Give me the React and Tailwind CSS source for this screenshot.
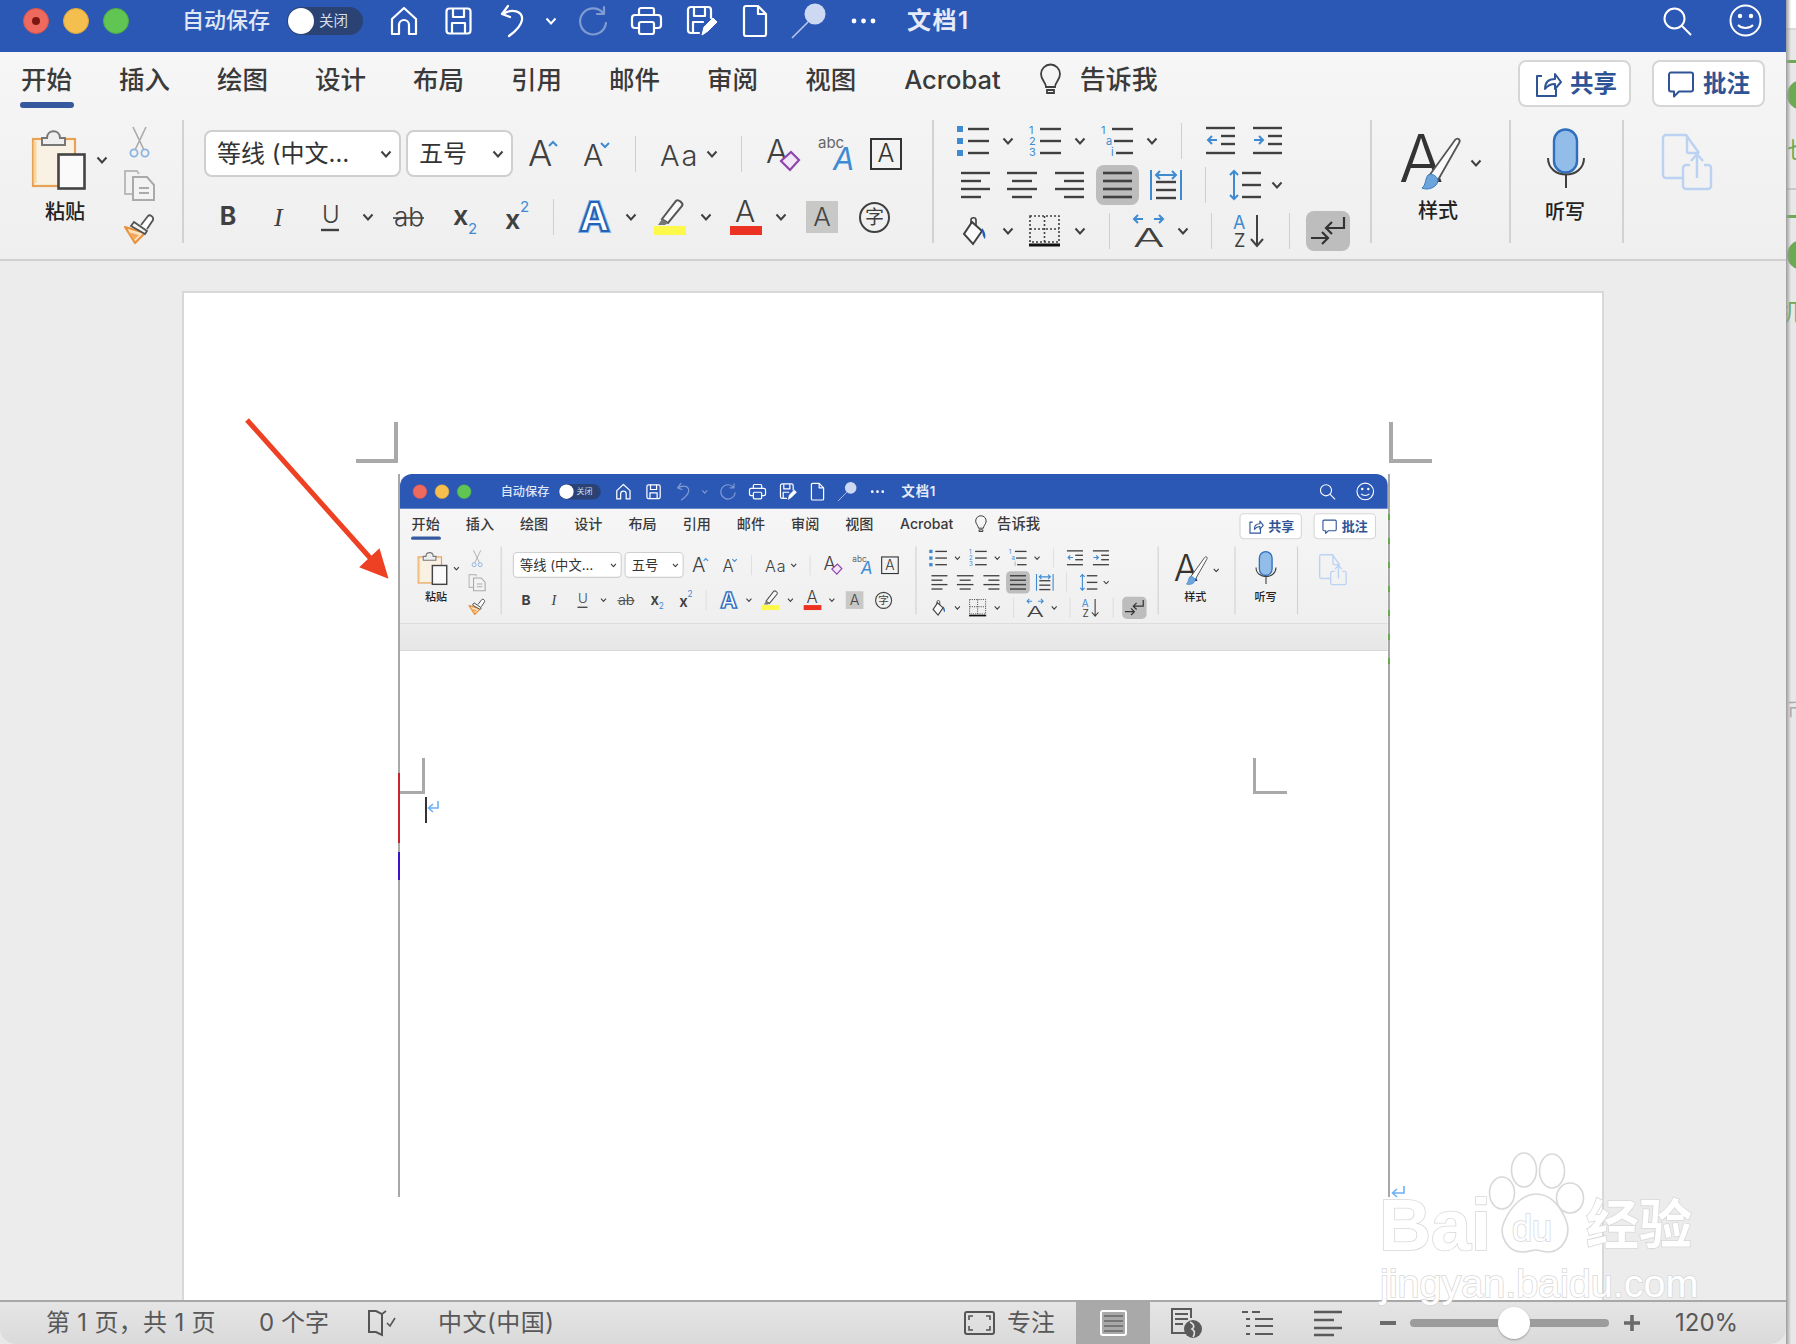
import React from "react";

const C = "#404040";
const BL = "#3f8bd2";

const T = ({ x, y, s, c = C, w = 400, i, children, ls }) => (
  <text x={x} y={y} fontSize={s} fill={c} fontWeight={w} fontStyle={i ? "italic" : "normal"} letterSpacing={ls}>
    {children}
  </text>
);

const Chev = ({ className = "", c = C }) => (
  <svg className={"shrink-0 " + className} width="12" height="8" viewBox="0 0 12 8" fill="none">
    <path d="M1.5 1.5 6 6.5l4.5-5" stroke={c} strokeWidth="2" />
  </svg>
);

const Sep = ({ className = "" }) => <div className={"w-[1px] h-[36px] shrink-0 bg-[#cfcfcf] " + className} />;

const Lines = ({ w, h, lines, c = C, sw = 2.4, className = "", children }) => (
  <svg className={"shrink-0 overflow-visible " + className} width={w} height={h} viewBox={`0 0 ${w} ${h}`} fill="none">
    {lines.map((l, i) => (
      <path key={i} d={`M${l[0]} ${l[1]}H${l[2]}`} stroke={c} strokeWidth={sw} />
    ))}
    {children}
  </svg>
);

const Sv = ({ w, h, className = "", children }) => (
  <svg className={"shrink-0 overflow-visible " + className} width={w} height={h} viewBox={`0 0 ${w} ${h}`} fill="none">
    {children}
  </svg>
);

function TitleBar({ dimUndo }) {
  const s = { stroke: "#fff", strokeWidth: 2.2, strokeLinejoin: "round", strokeLinecap: "round" };
  return (
    <div className="flex items-center h-[63px] shrink-0 bg-[#2c58b5] text-white">
      <div className="ml-[23px] w-[26px] h-[26px] rounded-full bg-[#ee6a5f] border border-[#d9534a] flex items-center justify-center">
        {!dimUndo && <div className="w-[8px] h-[8px] rounded-full bg-[#7d1610]" />}
      </div>
      <div className="ml-[14px] w-[26px] h-[26px] rounded-full bg-[#f5bf4f] border border-[#dfa73a]" />
      <div className="ml-[14px] w-[26px] h-[26px] rounded-full bg-[#61c554] border border-[#4fae45]" />
      <span className="ml-[53px] w-[88px] text-[22px] font-medium whitespace-nowrap text-[#dfe6f6]">自动保存</span>
      <div className="ml-[17px] w-[76px] h-[28px] rounded-full bg-[#2a4374] flex items-center">
        <div className="ml-[1px] w-[26px] h-[26px] rounded-full bg-white" />
        <span className="ml-[5px] text-[14.5px] text-[#d6dcea]">关闭</span>
      </div>
      <Sv w={28} h={30} className="ml-[27px]">
        <path d="M2 28V13L14 2l12 11v15h-7v-9a5 5 0 0 0-10 0v9z" {...s} />
      </Sv>
      <Sv w={27} h={28} className="ml-[27px]">
        <rect x="1.5" y="1.5" width="24" height="25" rx="3" {...s} />
        <path d="M8 2v8h11V2M7 26V16h13v10" {...s} />
      </Sv>
      <Sv w={25} h={33} className={"ml-[28px] " + (dimUndo ? "opacity-40" : "")}>
        <path d="M3 10c9-6 20-3 19 6-1 6-6 11-13 16M8 2 2 10l8 3" {...s} />
      </Sv>
      <Chev className={"ml-[20px] " + (dimUndo ? "opacity-40" : "")} c="#fff" />
      <Sv w={30} h={32} className="ml-[21px] opacity-40">
        <path d="M25 8a13 13 0 1 0 3 10M26 2v7h-7" {...s} />
      </Sv>
      <Sv w={31} h={28} className="ml-[23px]">
        <path d="M8 8V3a2 2 0 0 1 2-2h11a2 2 0 0 1 2 2v5M7 21H4a3 3 0 0 1-3-3v-7a3 3 0 0 1 3-3h23a3 3 0 0 1 3 3v7a3 3 0 0 1-3 3h-3" {...s} />
        <rect x="8" y="15" width="15" height="12" rx="2" {...s} />
      </Sv>
      <Sv w={30} h={30} className="ml-[25px]">
        <path d="M12 27H4a3 3 0 0 1-3-3V4a3 3 0 0 1 3-3h17a3 3 0 0 1 3 3v8" {...s} />
        <path d="M7 2v8h11V2M6 26V16h10" {...s} />
        <path d="M15 29l2-8 9-9 4 4-9 9z" fill="#fff" stroke="#fff" />
      </Sv>
      <Sv w={24} h={32} className="ml-[26px]">
        <path d="M3 1h12l8 8v20a2 2 0 0 1-2 2H3a2 2 0 0 1-2-2V3a2 2 0 0 1 2-2zM15 1v8h8" {...s} />
      </Sv>
      <Sv w={36} h={38} className="ml-[23px]">
        <circle cx="25" cy="12" r="10.5" fill="#cdd8f2" />
        <path d="M18 20 2 36" stroke="#b9c8ea" strokeWidth="1.6" />
      </Sv>
      <Sv w={25} h={6} className="ml-[25px]">
        <circle cx="3" cy="3" r="2.4" fill="#fff" />
        <circle cx="12.5" cy="3" r="2.4" fill="#fff" />
        <circle cx="22" cy="3" r="2.4" fill="#fff" />
      </Sv>
      <span className="ml-[31px] text-[24px] font-semibold tracking-[1.5px] text-[#e6ebf7] whitespace-nowrap">文档1</span>
      <Sv w={29} h={28} className="ml-auto">
        <circle cx="11.5" cy="11.5" r="10" stroke="#fff" strokeWidth="2" />
        <path d="m19 19 9 9" stroke="#fff" strokeWidth="2" />
      </Sv>
      <Sv w={33} h={33} className="ml-[37px] mr-[24px]">
        <circle cx="16.5" cy="16.5" r="15" stroke="#fff" strokeWidth="2" />
        <circle cx="11" cy="12" r="2.2" fill="#fff" />
        <circle cx="22" cy="12" r="2.2" fill="#fff" />
        <path d="M9 21c4 4 11 4 15 0" stroke="#fff" strokeWidth="2" />
      </Sv>
    </div>
  );
}

function Tabs() {
  const tab = "text-[25.5px] leading-[40px] font-medium text-[#3a3a3a] whitespace-nowrap";
  return (
    <div className="flex items-start h-[68px] pt-[8px] pl-[21px]">
      <div className="relative">
        <span className={tab}>开始</span>
        <div className="absolute left-[-1px] right-[-2px] top-[42px] h-[6px] rounded-full bg-[#35589f]" />
      </div>
      {["插入", "绘图", "设计", "布局", "引用", "邮件", "审阅", "视图"].map((t) => (
        <span key={t} className={tab + " ml-[47px]"}>
          {t}
        </span>
      ))}
      <span className={tab + " ml-[48px]"}>Acrobat</span>
      <Sv w={21} h={32} className="ml-[39px] mt-[4px]">
        <path d="M6 23c0-5-5-7-5-13a9.500 9.500 0 0 1 19 0c0 6-5 8-5 13zM7 26h7v3H7z" stroke={C} strokeWidth="1.8" />
      </Sv>
      <span className="ml-[19px] text-[26px] leading-[40px] font-medium text-[#3a3a3a] whitespace-nowrap">告诉我</span>
      <div className="ml-auto w-[113px] h-[47px] flex items-center bg-white border-2 border-[#d6d6d6] rounded-lg text-[#2f5496]">
        <Sv w={26} h={26} className="ml-[15px]">
          <path d="M7 5H2v20h19v-7M10 18c0-7 4-10 10-10V3l6 8-6 7v-5c-4 0-7 1-10 5z" stroke="#2f5496" strokeWidth="2" strokeLinejoin="round" />
        </Sv>
        <span className="ml-[9px] text-[23.5px] font-semibold">共享</span>
      </div>
      <div className="ml-[21px] mr-[21px] w-[113px] h-[47px] flex items-center bg-white border-2 border-[#d6d6d6] rounded-lg text-[#2f5496]">
        <Sv w={26} h={26} className="ml-[14px]">
          <path d="M3 1.500h20a2 2 0 0 1 2 2v15a2 2 0 0 1-2 2H11l-5 5v-5H3a2 2 0 0 1-2-2v-15a2 2 0 0 1 2-2z" stroke="#2f5496" strokeWidth="2" strokeLinejoin="round" />
        </Sv>
        <span className="ml-[9px] text-[23.5px] font-semibold">批注</span>
      </div>
    </div>
  );
}

function Clipboard() {
  return (
    <div className="w-[184px] shrink-0 h-full border-r-2 border-[#d2d2d2] flex items-start">
      <div className="ml-[32px] w-[75px] pt-[10px] flex flex-col">
        <div className="flex items-center">
          <Sv w={54} h={60}>
            <rect x="1" y="9" width="42" height="47" fill="#f9f2e4" stroke="#e8a255" strokeWidth="2.2" />
            <path d="M3 53V11" stroke="#f7d79f" strokeWidth="3" />
            <path d="M10 15V8h5c0-9 13-9 13 0h5v7z" fill="#eee" stroke="#777" strokeWidth="2" />
            <rect x="26.500" y="24.500" width="26" height="34" fill="#fafafa" stroke="#444" strokeWidth="2.6" />
          </Sv>
          <Chev className="ml-[10px]" />
        </div>
        <span className="mt-[8px] ml-[13px] text-[20px] leading-[28px] font-medium text-[#222]">粘贴</span>
      </div>
      <div className="ml-[16px] flex flex-col pt-[7px]">
        <Sv w={21} h={31} className="ml-[6px]">
          <path d="M4 0l11 23M17 0 6 23" stroke="#a9a9a9" strokeWidth="1.6" />
          <circle cx="5" cy="26" r="3.6" stroke="#8db4de" strokeWidth="1.8" />
          <circle cx="16" cy="26" r="3.6" stroke="#8db4de" strokeWidth="1.8" />
        </Sv>
        <Sv w={33} h={31} className="mt-[12px]">
          <path d="M13 24H2V1h12l2 3" stroke="#bbb" strokeWidth="2" />
          <path d="M10 7h14l7 8v15H10z" fill="#f3f3f3" stroke="#aaa" strokeWidth="2" />
          <path d="M16 18h10M16 23h10" stroke="#aaa" strokeWidth="2" />
        </Sv>
        <Sv w={32} h={30} className="mt-[13px]">
          <path d="M2 13 22 19 12 29Z" fill="#fbe3c4" stroke="#e8913c" strokeWidth="2.2" strokeLinejoin="round" />
          <path d="M5 18l11 3-5 5z" fill="#f2a95c" />
          <path d="M11 8 24 17l-2 3L8 12z" fill="#f5f5f5" stroke="#555" strokeWidth="1.8" />
          <path d="M18 11 25 2c2-2 6 1 5 4l-6 9" fill="#fff" stroke="#555" strokeWidth="1.8" />
        </Sv>
      </div>
    </div>
  );
}

function FontGroup() {
  return (
    <div className="w-[748px] shrink-0 h-full flex flex-col pt-[10px]">
      <div className="flex items-center h-[47px]">
        <div className="ml-[20px] w-[197px] h-[47px] flex items-center bg-white border-2 border-[#cfcfcf] rounded-lg">
          <span className="ml-[11px] text-[24px] text-[#333] whitespace-nowrap">等线 (中文…</span>
          <Chev className="ml-auto mr-[7px]" />
        </div>
        <div className="ml-[5px] w-[107px] h-[47px] flex items-center bg-white border-2 border-[#cfcfcf] rounded-lg">
          <span className="ml-[11px] text-[24px] text-[#333]">五号</span>
          <Chev className="ml-auto mr-[7px]" />
        </div>
        <Sv w={30} h={36} className="ml-[15px]">
          <T x={0} y={30} s={36} w={300}>A</T>
          <path d="m21 10 4-4 4 4" stroke={BL} strokeWidth="2" />
        </Sv>
        <Sv w={27} h={36} className="ml-[25px]">
          <T x={0} y={30} s={30} w={300}>A</T>
          <path d="m18 7 4 4 4-4" stroke={BL} strokeWidth="2" />
        </Sv>
        <Sep className="ml-[25px]" />
        <Sv w={38} h={36} className="ml-[24px]">
          <T x={0} y={30} s={29} w={300} ls={2}>Aa</T>
        </Sv>
        <Chev className="ml-[8px]" />
        <Sep className="ml-[23px]" />
        <Sv w={33} h={36} className="ml-[24px]">
          <T x={0} y={27} s={33} w={300}>A</T>
          <path d="m25 16 8 8-9 10-9-9z" fill="#f2e6f7" stroke="#8e44ad" strokeWidth="2.2" />
        </Sv>
        <Sv w={33} h={38} className="ml-[19px]">
          <T x={0} y={13} s={15} c="#666">abc</T>
          <T x={15} y={35} s={31} c={BL} i>A</T>
        </Sv>
        <div className="ml-[19px] w-[32px] h-[32px] border-2 border-[#333] flex items-center justify-center text-[25px] font-light text-[#333] leading-none">
          A
        </div>
      </div>
      <div className="flex items-center h-[40px] mt-[20px]">
        <span className="ml-[33px] w-[22px] text-center text-[25px] font-bold text-[#404040]">B</span>
        <Sv w={22} h={30} className="ml-[29px]">
          <text x="6" y="24" fontSize="26" fill={C} fontStyle="italic" fontFamily="Liberation Serif">I</text>
        </Sv>
        <Sv w={22} h={32} className="ml-[29px]">
          <T x={3} y={22} s={24} w={300}>U</T>
          <path d="M2 29h18" stroke={C} strokeWidth="2.4" />
        </Sv>
        <Chev className="ml-[21px]" />
        <Sv w={31} h={32} className="ml-[19px]">
          <T x={1} y={25} s={26} w={300}>ab</T>
          <path d="M0 17h31" stroke={C} strokeWidth="1.6" />
        </Sv>
        <Sv w={22} h={36} className="ml-[29px]">
          <T x={0} y={26} s={27} w={600}>x</T>
          <T x={15} y={35} s={15} c={BL}>2</T>
        </Sv>
        <Sv w={22} h={36} className="ml-[30px]">
          <T x={0} y={30} s={27} w={600}>x</T>
          <T x={15} y={13} s={15} c={BL}>2</T>
        </Sv>
        <Sep className="ml-[26px]" />
        <Sv w={33} h={36} className="ml-[24px]">
          <text x="16.500" y="32" textAnchor="middle" fontSize="40" fontWeight="700" fill="#7db2e8" stroke="#7db2e8" strokeWidth="4">A</text>
          <text x="16.500" y="32" textAnchor="middle" fontSize="40" fontWeight="700" fill="#fff" stroke="#2562b5" strokeWidth="2">A</text>
        </Sv>
        <Chev className="ml-[14px]" />
        <Sv w={32} h={38} className="ml-[17px]">
          <path d="M8 21 22 3c2-2 8 2 6 5L14 25z" fill="#f8f8f8" stroke="#555" strokeWidth="2" />
          <path d="M8 21l6 4-3 2H4z" fill="#777" />
          <rect x="0" y="28" width="32" height="9" fill="#fdf94a" />
        </Sv>
        <Chev className="ml-[14px]" />
        <Sv w={32} h={38} className="ml-[18px]">
          <T x={5} y={24} s={30} w={300}>A</T>
          <rect x="0" y="28" width="32" height="9" fill="#ec3323" />
        </Sv>
        <Chev className="ml-[13px]" />
        <div className="ml-[19px] w-[32px] h-[32px] bg-[#c8c8c6] flex items-center justify-center text-[26px] font-light text-[#444] leading-none">
          A
        </div>
        <div className="ml-[21px] w-[31px] h-[31px] rounded-full border-2 border-[#404040] flex items-center justify-center text-[19px] text-[#404040] leading-none">
          字
        </div>
      </div>
    </div>
  );
}

function ParaGroup() {
  const row = "flex items-center h-[40px]";
  const L3 = [[11, 3, 32], [11, 15, 32], [11, 27, 32]];
  return (
    <div className="w-[438px] shrink-0 h-full border-l-2 border-[#d2d2d2] flex flex-col pt-[3px] gap-[6px]">
      <div className={row}>
        <Lines w={32} h={30} lines={L3} className="ml-[23px]">
          <rect x="0" y="0" width="6" height="6" fill={BL} />
          <rect x="0" y="12" width="6" height="6" fill={BL} />
          <rect x="0" y="24" width="6" height="6" fill={BL} />
        </Lines>
        <Chev className="ml-[13px]" />
        <Lines w={32} h={30} lines={L3} className="ml-[15px]">
          <T x={0} y={8} s={11} c={BL}>1</T>
          <T x={0} y={19} s={11} c={BL}>2</T>
          <T x={0} y={30} s={11} c={BL}>3</T>
        </Lines>
        <Chev className="ml-[13px]" />
        <Lines w={32} h={30} lines={[[11, 3, 32], [13, 15, 32], [15, 27, 32]]} className="ml-[15px]">
          <T x={0} y={8} s={11} c={BL}>1</T>
          <T x={5} y={19} s={11} c={BL}>a</T>
          <T x={10} y={30} s={11} c={BL}>i</T>
        </Lines>
        <Chev className="ml-[13px]" />
        <Sep className="ml-[23px]" />
        <Lines w={29} h={30} lines={[[0, 2, 29], [15, 10, 29], [15, 18, 29], [0, 27, 29]]} className="ml-[24px]">
          <path d="M11 14H2m4-4-4 4 4 4" stroke={BL} strokeWidth="2" />
        </Lines>
        <Lines w={29} h={30} lines={[[0, 2, 29], [15, 10, 29], [15, 18, 29], [0, 27, 29]]} className="ml-[18px]">
          <path d="M1 14h9m-4-4 4 4-4 4" stroke={BL} strokeWidth="2" />
        </Lines>
      </div>
      <div className={row}>
        <Lines w={30} h={28} lines={[[1, 2, 30], [1, 10, 21], [1, 18, 30], [1, 26, 21]]} className="ml-[26px]" />
        <Lines w={30} h={28} lines={[[0, 2, 30], [5, 10, 25], [0, 18, 30], [5, 26, 25]]} className="ml-[17px]" />
        <Lines w={30} h={28} lines={[[0, 2, 29], [9, 10, 29], [0, 18, 29], [9, 26, 29]]} className="ml-[18px]" />
        <div className="ml-[11px] w-[43px] h-[40px] rounded-lg bg-[#bdbdbd] flex items-center justify-center">
          <Lines w={29} h={28} lines={[[0, 2, 29], [0, 10, 29], [0, 18, 29], [0, 26, 29]]} sw={2.6} />
        </div>
        <Lines w={32} h={34} lines={[[6, 14, 26], [6, 22, 26], [6, 30, 26]]} sw={2.4} className="ml-[11px]">
          <path d="M1 2v30M31 2v30" stroke={BL} strokeWidth="2" />
          <path d="M6 7h20M10 3 6 7l4 4M22 3l4 4-4 4" stroke={BL} strokeWidth="2" />
        </Lines>
        <Sep className="ml-[23px]" />
        <Lines w={32} h={32} lines={[[13, 4, 32], [13, 16, 32], [13, 28, 32]]} className="ml-[23px]">
          <path d="M5 2v28M1 6l4-4 4 4M1 26l4 4 4-4" stroke={BL} strokeWidth="2" />
        </Lines>
        <Chev className="ml-[10px]" />
      </div>
      <div className={row}>
        <Sv w={25} h={30} className="ml-[28px]">
          <path d="M9 8V4c0-3 5-3 5 0v6" stroke={C} strokeWidth="1.6" />
          <path d="M10 6 2 18l9 10 9-13z" fill="#fafafa" stroke={C} strokeWidth="2" />
          <path d="M20 12c3 3 4 7 3 11-2-2-3-5-3-11z" fill="#1f5ebd" />
        </Sv>
        <Chev className="ml-[15px]" />
        <Sv w={31} h={32} className="ml-[15px]">
          <path d="M1 1h29v26H1zM15.500 1v26M1 14h29" stroke={C} strokeWidth="1.6" strokeDasharray="2 2" />
          <path d="M0 30h31" stroke="#111" strokeWidth="3" />
        </Sv>
        <Chev className="ml-[14px]" />
        <Sep className="ml-[23px]" />
        <Sv w={31} h={34} className="ml-[23px]">
          <g transform="translate(0,33) scale(1.8,1)">
            <T x={0} y={0} s={26} w={300}>A</T>
          </g>
          <path d="M1 5h9M5 1 1 5l4 4M21 5h9M26 1l4 4-4 4" stroke={BL} strokeWidth="2" />
        </Sv>
        <Chev className="ml-[13px]" />
        <Sep className="ml-[22px]" />
        <Sv w={32} h={34} className="ml-[21px]">
          <T x={0} y={15} s={18} c={BL}>A</T>
          <T x={1} y={33} s={18}>Z</T>
          <path d="M24 1v30M18 25l6 7 6-7" stroke={C} strokeWidth="2" />
        </Sv>
        <Sep className="ml-[24px]" />
        <div className="ml-[16px] w-[44px] h-[40px] rounded-lg bg-[#bdbdbd] flex items-center justify-center">
          <Sv w={36} h={30}>
            <path d="M1 22h17m-6-6 6 6-6 6" stroke="#333" strokeWidth="2.2" />
            <path d="M34 1v11H17m5-6-6 6 6 6" stroke="#333" strokeWidth="2.2" />
          </Sv>
        </div>
      </div>
    </div>
  );
}

function Right() {
  return (
    <>
      <div className="w-[139px] shrink-0 h-full border-l-2 border-[#d2d2d2] flex flex-col pt-[14px]">
        <div className="flex items-center ml-[29px]">
          <Sv w={59} h={57}>
            <text x="-2" y="48" fontSize="66" fontWeight="300" fill="#333">A</text>
            <path d="M28 42 54 6c3-3 6 0 4 3L37 46z" fill="#fafafa" stroke="#555" strokeWidth="1.8" />
            <path d="M27 41c5-2 10 2 10 6-1 6-10 10-16 7 4-3 3-9 6-13z" fill="#6ba5dc" stroke="#3a7dc0" />
          </Sv>
          <Chev className="ml-[10px]" />
        </div>
        <span className="mt-[6px] ml-[46px] text-[20px] leading-[28px] font-medium text-[#222]">样式</span>
      </div>
      <div className="w-[113px] shrink-0 h-full border-l-2 border-[#d2d2d2] flex flex-col pt-[8px]">
        <Sv w={38} h={60} className="ml-[36px]">
          <rect x="7" y="1.500" width="23" height="43" rx="11.500" fill="#93bde9" stroke="#2f6fbe" strokeWidth="2.4" />
          <path d="M1 30c0 22 36 22 36 0M19 46v14" stroke={C} strokeWidth="2" />
        </Sv>
        <span className="mt-[10px] ml-[34px] text-[20px] leading-[28px] font-medium text-[#222]">听写</span>
      </div>
      <div className="flex-1 h-full border-l-2 border-[#d2d2d2] pt-[14px]">
        <Sv w={50} h={56} className="ml-[38px]">
          <path d="M20 44H4a3 3 0 0 1-3-3V4a3 3 0 0 1 3-3h20l13 18" stroke="#bcd2f2" strokeWidth="2.4" />
          <path d="M25 1v16a2 2 0 0 0 2 2h10" stroke="#bcd2f2" strokeWidth="2.4" />
          <path d="M28 31h-4a3 3 0 0 0-3 3v18a3 3 0 0 0 3 3h22a3 3 0 0 0 3-3V34a3 3 0 0 0-3-3h-4M35 44V21m-6 6 6-7 6 7" stroke="#bcd2f2" strokeWidth="2.4" />
        </Sv>
      </div>
    </>
  );
}

function Chrome({ dimUndo }) {
  return (
    <>
      <TitleBar dimUndo={dimUndo} />
      <div className="h-[209px] shrink-0 bg-gradient-to-b from-[#f6f6f6] to-[#efefef] border-b-2 border-[#d0d0d0] flex flex-col">
        <Tabs />
        <div className="flex items-start h-[123px]">
          <Clipboard />
          <FontGroup />
          <ParaGroup />
          <Right />
        </div>
      </div>
    </>
  );
}

function Inner() {
  return (
    <div className="relative ml-[214px] mt-[181px] w-[992px] h-[723px] border-l-2 border-r-2 border-[#a8a8a8] bg-white">
      <div className="h-[177px] rounded-t-[12px] overflow-hidden">
        <div className="w-[1786px] origin-top-left scale-[0.553] flex flex-col">
          <Chrome dimUndo />
          <div className="h-[49px] bg-gradient-to-b from-[#ececec] to-[#e6e6e6] border-b-2 border-[#c4c4c4]" />
        </div>
      </div>
      <div className="absolute left-[-2px] top-[299px] w-[2px] h-[70px] bg-[#c8242b]" />
      <div className="absolute left-[-2px] top-[378px] w-[2px] h-[28px] bg-[#3a14c8]" />
      <div className="absolute right-[-2px] top-[40px] w-[2px] h-[150px] bg-[repeating-linear-gradient(#6aa84f_0_6px,transparent_6px_24px)]" />
    </div>
  );
}

const Crop = ({ className }) => <div className={"absolute border-[#a9a9a9] " + className} />;

function Page() {
  return (
    <div className="relative w-[1418px] h-[1007px] ml-[184px] bg-white shadow-[0_0_0_2px_#d8d8d8] flex flex-col">
      <Crop className="left-[172px] top-[129px] w-[42px] h-[41px] border-r-4 border-b-4" />
      <Crop className="left-[1205px] top-[129px] w-[43px] h-[41px] border-l-4 border-b-4" />
      <Inner />
      <Crop className="left-[216px] top-[465px] w-[25px] h-[36px] border-r-[3px] border-b-[3px]" />
      <Crop className="left-[1069px] top-[465px] w-[34px] h-[36px] border-l-[3px] border-b-[3px]" />
      <div className="absolute left-[241px] top-[504px] w-[2px] h-[26px] bg-[#333]" />
      <svg className="absolute left-[243px] top-[507px]" width="13" height="14" viewBox="0 0 13 14" fill="none">
        <path d="M11 1v7H2m4-4L1.500 8 6 12" stroke="#6fb0f5" strokeWidth="1.6" />
      </svg>
      <svg className="absolute left-[1207px] top-[892px]" width="15" height="14" viewBox="0 0 15 14" fill="none">
        <path d="M13 1v7H2m4-4L1.500 8 6 12" stroke="#6fb0f5" strokeWidth="1.6" />
      </svg>
      <svg className="absolute left-[60px] top-[124px]" width="150" height="165" viewBox="0 0 150 165" fill="none">
        <path d="M3 3 128 143" stroke="#ee4023" strokeWidth="5" />
        <path d="M143 160 117 150 135 133z" fill="#ee4023" stroke="#ee4023" strokeWidth="2" />
      </svg>
    </div>
  );
}

function StatusBar() {
  const t = "text-[24px] text-[#585858] whitespace-nowrap";
  return (
    <div className="h-[44px] shrink-0 flex items-center bg-gradient-to-b from-[#e5e5e5] to-[#dadada] border-t-2 border-[#a8a8a8] rounded-b-[16px] overflow-hidden">
      <span className={t + " ml-[46px] w-[170px] tracking-[0.3px]"}>第 1 页，共 1 页</span>
      <span className={t + " ml-[43px] w-[69px]"}>0 个字</span>
      <Sv w={28} h={28} className="ml-[40px]">
        <path d="M1 2h7l6 3v21l-6-3H1zM14 5v21" stroke="#555" strokeWidth="2" />
        <path d="M14 5l4-3M19 14l3 3 5-8" stroke="#555" strokeWidth="1.6" />
      </Sv>
      <span className={t + " ml-[42px] w-[116px] tracking-[0.5px]"}>中文(中国)</span>
      <Sv w={31} h={24} className="ml-[410px]">
        <rect x="1" y="1" width="29" height="22" rx="2" stroke="#555" strokeWidth="2" />
        <path d="M5 9V5h4M26 9V5h-4M5 15v4h4M26 15v4h-4" stroke="#555" strokeWidth="1.6" />
      </Sv>
      <span className={t + " ml-[12px] w-[48px]"}>专注</span>
      <div className="ml-[21px] w-[74px] self-stretch bg-[#a9a9a9] flex items-center justify-center">
        <Lines w={27} h={26} c="#777" lines={[[4, 6, 23], [4, 11, 23], [4, 16, 23], [4, 21, 23]]} sw={2}>
          <rect x="1" y="1" width="25" height="24" rx="2" stroke="#fff" strokeWidth="2" fill="none" />
        </Lines>
      </div>
      <Sv w={32} h={30} className="ml-[20px]">
        <path d="M18 25H2V1h19v9" stroke="#5a5a5a" strokeWidth="2" />
        <path d="M5 6h13M5 11h13M5 16h8" stroke="#5a5a5a" strokeWidth="2" />
        <circle cx="23" cy="21" r="9" fill="#5a5a5a" />
        <path d="M20 14c4 2 5 5 2 7 3 2 3 5 1 8" stroke="#ddd" strokeWidth="1.6" />
      </Sv>
      <Lines w={31} h={26} c="#5a5a5a" sw={2} className="ml-[40px]" lines={[[0, 2, 6], [10, 2, 18], [4, 9, 8], [13, 9, 31], [4, 16, 8], [13, 16, 31], [4, 24, 8], [13, 24, 31]]} />
      <Lines w={28} h={26} c="#5a5a5a" sw={2.4} className="ml-[41px]" lines={[[0, 2, 28], [0, 10, 20], [0, 18, 28], [0, 25, 20]]} />
      <Lines w={16} h={6} c="#6a6a6a" sw={4} className="ml-[38px]" lines={[[0, 3, 16]]} />
      <div className="relative ml-[14px] w-[199px] h-[8px] rounded-full bg-[#9c9c9c]">
        <div className="absolute left-[88px] top-[-12px] w-[32px] h-[32px] rounded-full bg-white shadow-[0_1px_2px_#999]" />
      </div>
      <Sv w={16} h={16} className="ml-[15px]">
        <path d="M0 8h16M8 0v16" stroke="#6a6a6a" strokeWidth="3.6" />
      </Sv>
      <span className={t + " ml-[35px]"}>120%</span>
    </div>
  );
}

function Watermark() {
  const st = "text-white [-webkit-text-stroke:1.6px_#d8d8d8] [paint-order:stroke_fill] whitespace-nowrap [font-family:'Liberation_Sans','Noto_Sans_CJK_SC',sans-serif]";
  return (
    <>
      <span className={"absolute left-[1379px] top-[1183px] text-[72px] leading-[84px] font-bold " + st}>Bai</span>
      <svg className="absolute left-[1486px] top-[1150px]" width="104" height="106" viewBox="0 0 104 106">
        <g fill="#fff" stroke="#d8d8d8" strokeWidth="1.6">
          <ellipse cx="16" cy="43" rx="12.500" ry="16" />
          <ellipse cx="38" cy="20" rx="12.500" ry="17" />
          <ellipse cx="66" cy="21" rx="12.500" ry="17" />
          <ellipse cx="84" cy="48" rx="13.500" ry="15" />
          <path d="M50 44c14 0 24 12 30 26 6 16-4 32-18 32-5 0-8-2-12-2s-8 2-14 2C22 102 12 86 18 72c6-14 18-28 32-28z" />
        </g>
      </svg>
      <span className={"absolute left-[1512px] top-[1207px] text-[36px] leading-[44px] " + st}>du</span>
      <span className={"absolute left-[1586px] top-[1190px] text-[53px] leading-[72px] font-bold " + st}>经验</span>
      <span className={"absolute left-[1380px] top-[1261px] text-[39.5px] leading-[44px] " + st}>jingyan.baidu.com</span>
    </>
  );
}

function Aside() {
  const g = "absolute text-[#6aaa50] text-[24px]";
  return (
    <div className="relative flex-1 h-full overflow-hidden bg-[#e8e8e8]">
      <div className="h-[30px] bg-white border-b-2 border-[#d8d8d8]" />
      <div className="absolute left-0 top-[60px] w-full h-[3px] bg-[#6aaa50]" />
      <div className="absolute left-[1px] top-[80px] w-[30px] h-[30px] rounded-full bg-[#6aaa50]" />
      <span className={g + " left-[1px] top-[132px]"}>也</span>
      <div className="absolute left-0 top-[188px] w-full h-[2px] bg-[#c8c8c8]" />
      <div className="absolute left-0 top-[215px] w-full h-[25px] border-t-[3px] border-[#6aaa50]" />
      <div className="absolute left-[1px] top-[240px] w-[30px] h-[30px] rounded-full bg-[#6aaa50]" />
      <span className={g + " left-[-9px] top-[295px]"}>机</span>
      <span className="absolute left-[1px] top-[696px] text-[#aaa] text-[20px]">币</span>
      <div className="absolute inset-y-0 left-0 w-[5px] bg-gradient-to-r from-[#9c9c9c] to-transparent" />
    </div>
  );
}

export default function App() {
  return (
    <div className="relative flex w-[1796px] h-[1344px] overflow-hidden bg-[#e8e8e8] [font-family:Inter,'Noto_Sans_CJK_SC',sans-serif]">
      <div className="w-[1786px] h-full shrink-0 flex flex-col overflow-hidden">
        <div className="mt-[-11px] flex flex-col shrink-0">
          <Chrome />
        </div>
        <div className="flex-1 min-h-0 bg-[#ececec] pt-[32px] overflow-hidden">
          <Page />
        </div>
        <StatusBar />
      </div>
      <Aside />
      <Watermark />
    </div>
  );
}
